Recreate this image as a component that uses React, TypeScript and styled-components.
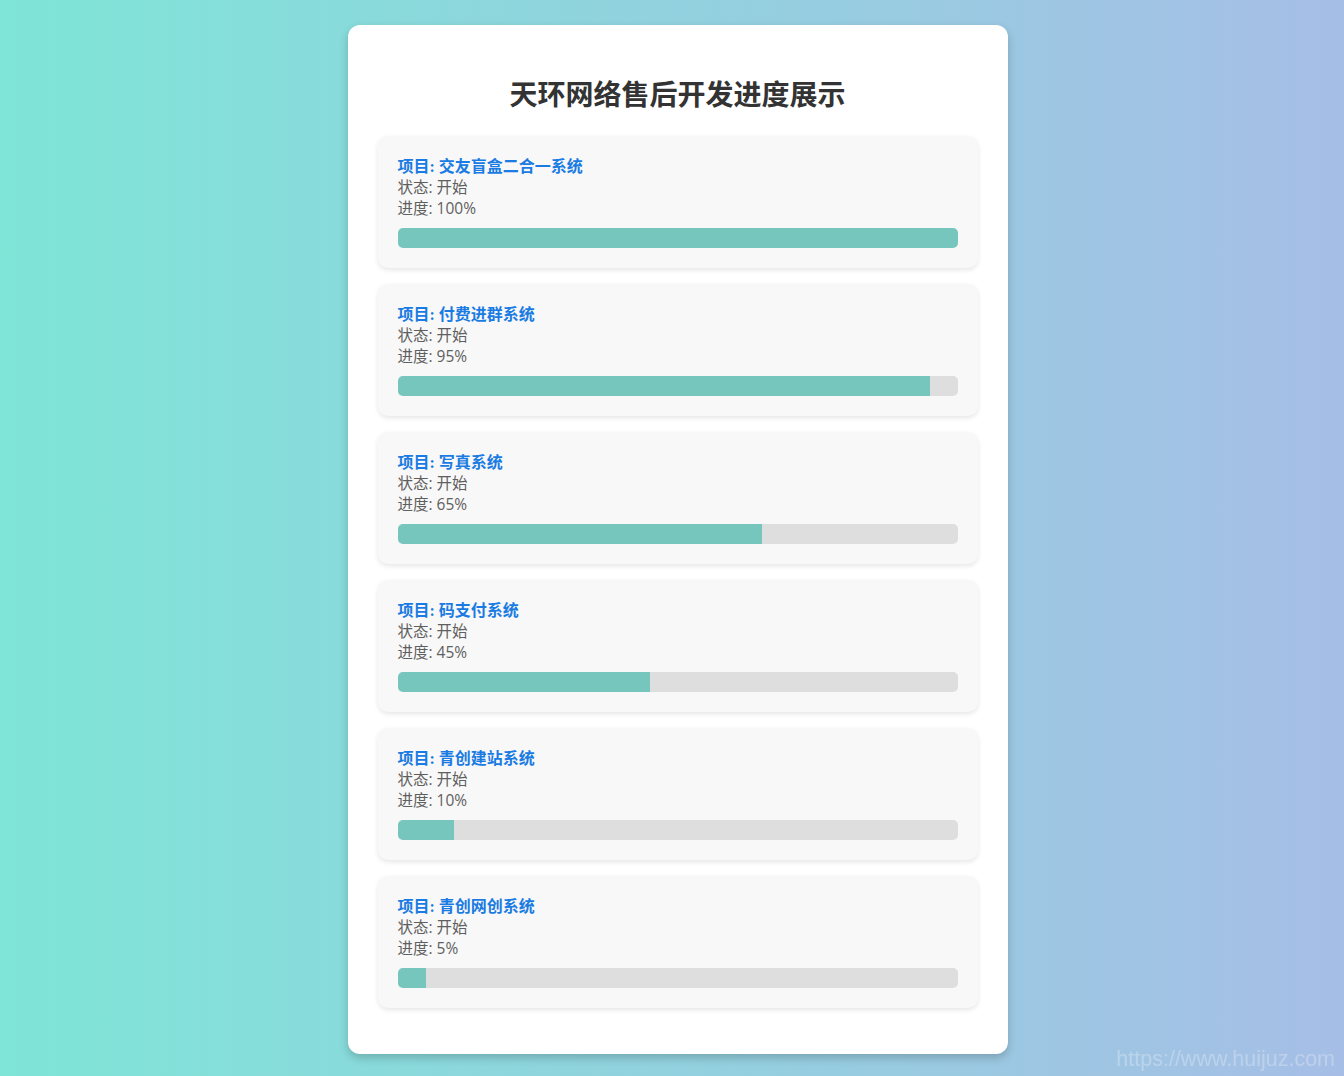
import { createGlobalStyle, styled } from "styled-components";

const projects = [
  { name: "交友盲盒二合一系统", status: "开始", progress: 100 },
  { name: "付费进群系统", status: "开始", progress: 95 },
  { name: "写真系统", status: "开始", progress: 65 },
  { name: "码支付系统", status: "开始", progress: 45 },
  { name: "青创建站系统", status: "开始", progress: 10 },
  { name: "青创网创系统", status: "开始", progress: 5 },
];

const GlobalStyle = createGlobalStyle`
  html, body {
    margin: 0;
    padding: 0;
  }

  body {
    min-height: 1076px;
    background: linear-gradient(to right, #7ee5d7 0%, #a6bee6 100%);
    font-family: "Open Sans", "Noto Sans CJK SC", sans-serif;
    overflow: hidden;
  }
`;

const Page = styled.div`
  display: flex;
  justify-content: center;
  padding: 25px 0 0 11px;
  min-height: 1076px;
  box-sizing: border-box;
`;

const Card = styled.div`
  width: 660px;
  height: fit-content;
  box-sizing: border-box;
  padding: 30px;
  background: #fff;
  border-radius: 12px;
  box-shadow: 0 4px 10px rgba(0, 0, 0, 0.2);
`;

const Title = styled.h1`
  height: 34px;
  margin: 21px 0 26px;
  text-align: center;
  font: 700 28px/34px "Noto Sans CJK SC", sans-serif;
  color: #333;
`;

const Item = styled.div`
  margin-bottom: 16px;
  padding: 20px;
  background: #f8f8f8;
  border-radius: 10px;
  box-shadow: 0 2px 5px rgba(0, 0, 0, 0.1);
`;

const Name = styled.h3`
  height: 21px;
  margin: 0;
  font: 700 16px/21px "Liberation Serif", "Noto Sans CJK SC", serif;
  color: #1a7be2;
`;

const Line = styled.p`
  height: 21px;
  margin: 0;
  font: 400 15.5px/21px "Open Sans", "Noto Sans CJK SC", sans-serif;
  color: #5f5f5f;
`;

const Track = styled.div`
  margin-top: 9px;
  height: 20px;
  background: #dedede;
  border-radius: 5px;
  overflow: hidden;
`;

const Fill = styled.div`
  height: 100%;
  background: #76c6bd;
`;

const Watermark = styled.div`
  position: fixed;
  right: 9px;
  bottom: 4px;
  font: 400 21.5px/26px "Liberation Sans", Arial, sans-serif;
  color: rgba(255, 255, 255, 0.28);
`;

export default function App() {
  return (
    <>
      <GlobalStyle />
      <Page>
        <Card>
          <Title>天环网络售后开发进度展示</Title>
          {projects.map((p) => (
            <Item key={p.name}>
              <Name>项目: {p.name}</Name>
              <Line>状态: {p.status}</Line>
              <Line>进度: {p.progress}%</Line>
              <Track>
                <Fill style={{ width: `${p.progress}%` }} />
              </Track>
            </Item>
          ))}
        </Card>
      </Page>
      <Watermark>https://www.huijuz.com</Watermark>
    </>
  );
}
